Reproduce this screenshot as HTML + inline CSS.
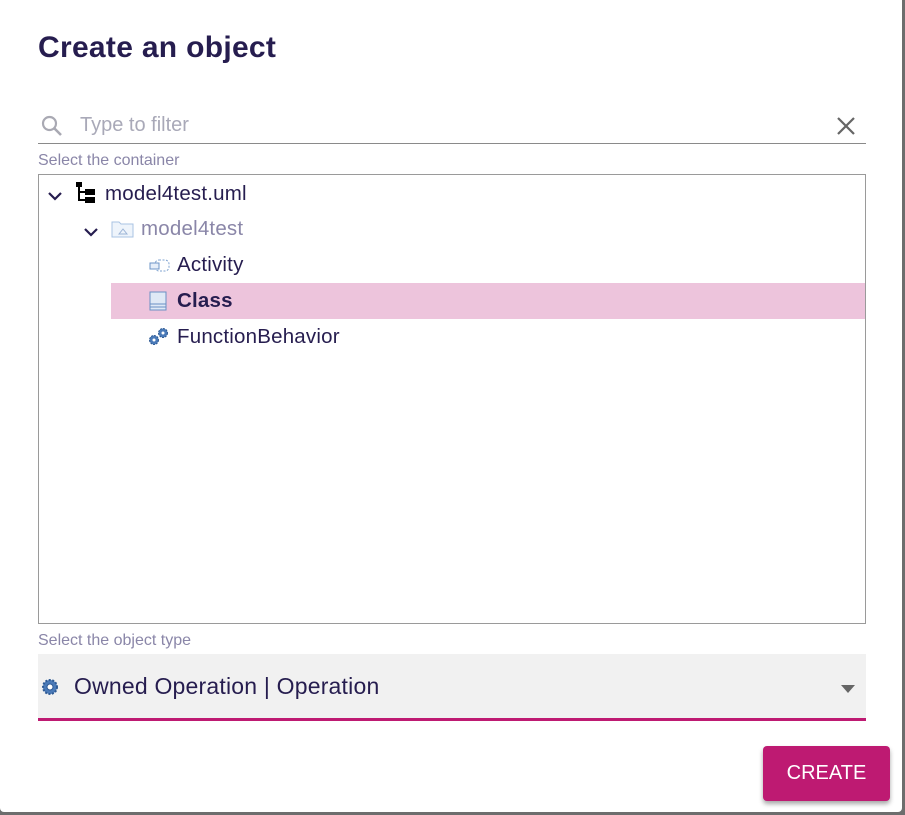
<!DOCTYPE html>
<html><head><style>
body{margin:0;width:905px;height:815px;background:#6d6d6d;font-family:"Liberation Sans",sans-serif;position:relative;overflow:hidden}
.dlg{position:absolute;left:0;top:-4px;width:902px;height:816px;background:#fff;border-radius:4px}
.abs{position:absolute}
h1{position:absolute;left:38px;top:35px;margin:0;font-size:30px;font-weight:bold;color:#261d4f;letter-spacing:0.3px}
.muted{color:#8a86a8;font-size:16px}
.tree{position:absolute;left:38px;top:178px;width:826px;height:448px;border:1px solid #9a9a9a}
.row{position:absolute;font-size:20.5px;color:#261d4f;height:36px;line-height:36px;letter-spacing:0.2px}
</style></head><body>
<div class="dlg">
<h1>Create an object</h1>
<svg class="abs" style="left:40px;top:118px" width="24" height="24" viewBox="0 0 24 24"><circle cx="9.5" cy="9.5" r="6.5" fill="none" stroke="#a9a9b3" stroke-width="2.2"/><path d="M14 14l7 7" stroke="#a9a9b3" stroke-width="2.6"/></svg>
<div class="abs" style="left:80px;top:118px;font-size:20px;color:#a9a9b8">Type to filter</div>
<svg class="abs" style="left:836px;top:120px" width="20" height="20"><path d="M2 2L18 18M18 2L2 18" stroke="#666" stroke-width="2.2"/></svg>
<div class="abs" style="left:38px;top:147px;width:828px;height:1px;background:#8a8a8a"></div>
<div class="abs muted" style="left:38px;top:156px">Select the container</div>
<div class="tree">
 <svg class="abs" style="left:8px;top:15px" width="16" height="12"><path d="M2 3l6 6 6-6" fill="none" stroke="#261d4f" stroke-width="2.2"/></svg>
 <svg class="abs" style="left:36px;top:6px" width="24" height="24"><path d="M4 3v16h6M4 11h6" stroke="#000" stroke-width="2" fill="none"/><rect x="1" y="1" width="6" height="5" fill="#000"/><rect x="10" y="8" width="10" height="6" fill="#000"/><rect x="10" y="16" width="10" height="6" fill="#000"/></svg>
 <div class="row" style="left:66px;top:1px">model4test.uml</div>
 <svg class="abs" style="left:44px;top:51px" width="16" height="12"><path d="M2 3l6 6 6-6" fill="none" stroke="#261d4f" stroke-width="2.2"/></svg>
 <svg class="abs" style="left:72px;top:45px" width="24" height="18"><path d="M1 2h7l2 2h12v13H1z" fill="#eef4fb" stroke="#a9c3e3"/><path d="M8 14l4-5 4 5z" fill="none" stroke="#9bb3d6"/></svg>
 <div class="row" style="left:102px;top:36px;color:#8a86a8">model4test</div>
 <svg class="abs" style="left:110px;top:83px" width="22" height="16"><rect x="6" y="2" width="14" height="11" rx="4" fill="none" stroke="#7fa3d0" stroke-dasharray="2 1.5"/><rect x="1" y="5" width="9" height="6" fill="#e6eef9" stroke="#6e94c7"/></svg>
 <div class="row" style="left:138px;top:72px">Activity</div>
 <div class="abs" style="left:72px;top:108px;width:754px;height:36px;background:#edc4dc"></div>
 <svg class="abs" style="left:110px;top:116px" width="18" height="20"><rect x="1" y="1" width="16" height="18" fill="#dfe9f6" stroke="#6a8fc4"/><path d="M1 13h16M1 16h16" stroke="#6a8fc4"/></svg>
 <div class="row" style="left:138px;top:108px;font-weight:bold">Class</div>
 <svg class="abs" style="left:108px;top:152px" width="24" height="20"><circle cx="7" cy="13" r="4.5" fill="#4a7ab8" stroke="#2e5a94" stroke-dasharray="2 1"/><circle cx="16" cy="6" r="4.5" fill="#4a7ab8" stroke="#2e5a94" stroke-dasharray="2 1"/><circle cx="7" cy="13" r="1.5" fill="#fff"/><circle cx="16" cy="6" r="1.5" fill="#fff"/></svg>
 <div class="row" style="left:138px;top:144px">FunctionBehavior</div>
</div>
<div class="abs muted" style="left:38px;top:636px">Select the object type</div>
<div class="abs" style="left:38px;top:658px;width:828px;height:64px;background:#f1f1f1;border-bottom:3px solid #be1a72"></div>
<svg class="abs" style="left:40px;top:681px" width="20" height="20"><circle cx="10" cy="10" r="7" fill="#4a7ab8" stroke="#2e5a94" stroke-width="2" stroke-dasharray="2 1.5"/><circle cx="10" cy="10" r="3" fill="#fff" stroke="#2e5a94"/></svg>
<div class="abs" style="left:74px;top:677px;font-size:23px;color:#261d4f;letter-spacing:0.2px">Owned Operation | Operation</div>
<svg class="abs" style="left:840px;top:688px" width="16" height="10"><path d="M1 1h14l-7 8z" fill="#666"/></svg>
<div class="abs" style="left:763px;top:750px;width:127px;height:55px;background:#be1a72;border-radius:4px;box-shadow:0 3px 5px rgba(0,0,0,.35);color:#fff;font-size:20px;line-height:55px;text-align:center">CREATE</div>
</div>
</body></html>
